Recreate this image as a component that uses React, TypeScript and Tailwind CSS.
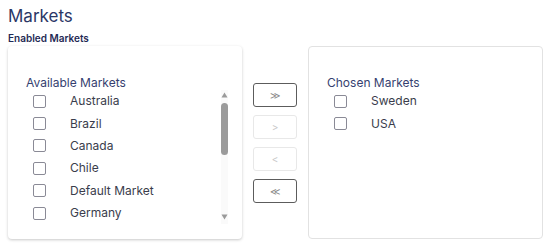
import React from "react";

const available = ["Australia", "Brazil", "Canada", "Chile", "Default Market", "Germany"];
const chosen = ["Sweden", "USA"];

function Row({ label }: { label: string }) {
  return (
    <div className="flex h-[22.4px] shrink-0 items-center pl-[7px]">
      <span className="box-border h-[13px] w-[13px] shrink-0 rounded-[2px] border border-[#8a8a96] bg-white" />
      <span className="ml-[24px] text-[12px] leading-[14px] text-[#3a3d4c]">{label}</span>
    </div>
  );
}

function Btn({ children, enabled }: { children: React.ReactNode; enabled: boolean }) {
  return (
    <div
      className={
        "flex h-[24px] w-[44px] items-center justify-center rounded-[3px] border text-[10px] leading-none " +
        (enabled ? "border-[#5c5c5c] text-[#888]" : "border-[#e8e8e8] text-[#c8c8c8]")
      }
    >
      {children}
    </div>
  );
}

export default function App() {
  return (
    <div className="h-[245px] w-[550px] bg-white px-[8px] pt-[4px] font-['Inter',sans-serif]">
      <div className="text-[17px] leading-[24px] text-[#2b3766]">Markets</div>
      <div className="mt-[3px] text-[10px] font-semibold leading-[14px] text-[#1f2a55]">Enabled Markets</div>
      <div className="mt-[1px] flex h-[193px] w-[535px] items-center">
        <div className="flex h-full w-[234px] flex-col rounded-[4px] bg-white pl-[18px] pt-[30px] shadow-[0_1px_3px_rgba(0,0,0,0.22)]">
          <div className="text-[12px] leading-[14px] text-[#363f70]">Available Markets</div>
          <div className="flex h-[134px] w-[202px]">
            <div className="flex flex-1 flex-col overflow-hidden">
              {available.map((m) => (
                <Row key={m} label={m} />
              ))}
            </div>
            <div className="flex w-[7px] flex-col items-center bg-[#fafafa]">
              <svg className="mt-[2px] shrink-0" width="7" height="6" viewBox="0 0 7 6">
                <path d="M3.5 0.5 L6.5 5.5 L0.5 5.5 Z" fill="#9a9a9a" />
              </svg>
              <div className="mt-[5px] h-[52px] w-[7px] rounded-full bg-[#9b9b9b]" />
              <div className="flex-1" />
              <svg className="mb-[4px] shrink-0" width="7" height="6" viewBox="0 0 7 6">
                <path d="M0.5 0.5 L6.5 0.5 L3.5 5.5 Z" fill="#9a9a9a" />
              </svg>
            </div>
          </div>
        </div>
        <div className="flex w-[66px] flex-col items-center gap-[8px]">
          <Btn enabled>≫</Btn>
          <Btn enabled={false}>&gt;</Btn>
          <Btn enabled={false}>&lt;</Btn>
          <Btn enabled>≪</Btn>
        </div>
        <div className="flex h-full w-[235px] flex-col rounded-[4px] border border-[#e2e2e2] bg-white pl-[18px] pt-[29px]">
          <div className="text-[12px] leading-[14px] text-[#363f70]">Chosen Markets</div>
          <div className="flex flex-col">
            {chosen.map((m) => (
              <Row key={m} label={m} />
            ))}
          </div>
        </div>
      </div>
    </div>
  );
}
